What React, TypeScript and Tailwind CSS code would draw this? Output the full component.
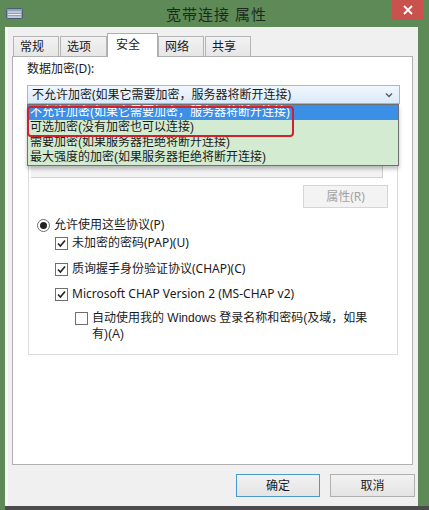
const font = { fontFamily: '"Noto Sans", "Noto Sans CJK SC", sans-serif' };
const listFont = { fontFamily: '"Liberation Sans", "Noto Sans CJK SC", sans-serif' };

const tabs = [
  { name: "常规", w: "w-[46px]", ml: "ml-[1px]" },
  { name: "选项", w: "w-[47px]", ml: "ml-[1px]" },
  { name: "安全", w: "w-[51px]", ml: "ml-0", active: true },
  { name: "网络", w: "w-[46px]", ml: "ml-0" },
  { name: "共享", w: "w-[46px]", ml: "ml-[1px]" },
];

const options = [
  "不允许加密(如果它需要加密，服务器将断开连接)",
  "可选加密(没有加密也可以连接)",
  "需要加密(如果服务器拒绝将断开连接)",
  "最大强度的加密(如果服务器拒绝将断开连接)",
];

function Check({ checked }: { checked: boolean }) {
  return (
    <span className="flex h-[13px] w-[13px] shrink-0 items-center justify-center border border-[#6f6f6f] bg-white">
      {checked && (
        <svg width="9" height="9" viewBox="0 0 9 9">
          <path d="M1 4.5 L3.4 7 L8 1.5" fill="none" stroke="#222" strokeWidth="1.6" />
        </svg>
      )}
    </span>
  );
}

export default function App() {
  return (
    <div
      className="relative flex h-[510px] w-[429px] flex-col overflow-hidden bg-[#5e8a58] text-[12px] text-[#1a1a1a]"
      style={font}
    >
      {/* title bar */}
      <div className="relative flex h-[27px] shrink-0 items-center">
        <svg className="ml-[6px]" width="17" height="11" viewBox="0 0 17 11">
          <rect x="0.5" y="0.5" width="16" height="10" rx="1" fill="#8fa3b8" stroke="#4d5f72" />
          <path d="M2 4h13M2 6.5h13M2 9h13" stroke="#e8eef4" strokeWidth="1" />
        </svg>
        <div className="absolute left-[166px] top-[3px] text-[length:15px] tracking-[1px] text-[color:#1c2a1c]">
          宽带连接 属性
        </div>
        <div className="absolute right-[6px] top-0 flex h-[20px] w-[31px] items-center justify-center bg-[#c9524f]">
          <svg width="10" height="10" viewBox="0 0 10 10">
            <path d="M1 1L9 9M9 1L1 9" stroke="#fff" strokeWidth="1.8" />
          </svg>
        </div>
      </div>

      {/* client area */}
      <div className="ml-[5px] flex h-[479px] w-[413px] shrink-0 flex-col border-l-[3px] border-[#f7faf7] bg-[#f0f0f0] pl-[4px]">
        {/* tabs */}
        <div className="mt-[6px] flex h-[23px] items-end">
          {tabs.map((t) =>
            t.active ? (
              <div
                key={t.name}
                className={`relative z-10 -mb-[1px] h-[24px] ${t.w} ${t.ml} border border-b-0 border-[#adadad] bg-white pl-[8px] pt-[3px] leading-[16px]`}
              >
                {t.name}
              </div>
            ) : (
              <div
                key={t.name}
                className={`h-[20px] ${t.w} ${t.ml} border border-b-0 border-[#b4b4b4] bg-gradient-to-b from-[#f2f2f2] to-[#e6e6e6] pl-[6px] pt-[2px] leading-[16px]`}
              >
                {t.name}
              </div>
            )
          )}
        </div>

        {/* tab pane */}
        <div className="relative h-[409px] w-[401px] border border-[#b0b0b0] bg-white pl-[14px]">
          <div className="mt-[5px] h-[14px] leading-[14px]">数据加密(D):</div>

          {/* combobox */}
          <div className="mt-[9px] flex h-[19px] w-[373px] items-center border border-[#8fbde9] bg-gradient-to-b from-[#f1f7fd] to-[#d9eafa] pl-[4px]">
            <span className="flex-1 leading-[16px]">{options[0]}</span>
            <svg className="mr-[6px]" width="8" height="6" viewBox="0 0 8 6">
              <path d="M1 1.5L4 4.5L7 1.5" fill="none" stroke="#5a5a5a" strokeWidth="1.4" />
            </svg>
          </div>

          {/* authentication group */}
          <div className="ml-[1px] mt-[14px] flex h-[237px] w-[370px] flex-col border border-[#dcdcdc]">
            <div className="h-[39px]" />
            <div className="ml-[2px] h-[20px] w-[352px] border-b border-r border-[#cfcfcf] bg-[#f3f3f3]" />
            <div className="ml-auto mr-[9px] mt-[7px] flex h-[23px] w-[85px] items-center justify-center border border-[#d5d5d5] bg-[#f3f3f3] text-[#a3a3a3]">
              属性(R)
            </div>
            <div className="ml-[8px] mt-[10px] flex h-[14px] items-center gap-[4px]">
              <span className="flex h-[13px] w-[13px] items-center justify-center rounded-full border border-[#6f6f6f] bg-white">
                <span className="h-[7px] w-[7px] rounded-full bg-[#222]" />
              </span>
              <span className="leading-[14px]">允许使用这些协议(P)</span>
            </div>
            <div className="ml-[26px] mt-[4px] flex h-[14px] items-center gap-[4px]">
              <Check checked />
              <span className="leading-[14px]">未加密的密码(PAP)(U)</span>
            </div>
            <div className="ml-[26px] mt-[12px] flex h-[14px] items-center gap-[4px]">
              <Check checked />
              <span className="leading-[14px]">质询握手身份验证协议(CHAP)(C)</span>
            </div>
            <div className="ml-[26px] mt-[11px] flex h-[14px] items-center gap-[4px]">
              <Check checked />
              <span className="leading-[14px]">Microsoft CHAP Version 2 (MS-CHAP v2)</span>
            </div>
            <div className="ml-[46px] mt-[9px] flex items-start gap-[4px]">
              <span className="mt-[2px]">
                <Check checked={false} />
              </span>
              <span className="leading-[16px]" style={listFont}>
                自动使用我的 Windows 登录名称和密码(及域，如果
                <br />
                有)(A)
              </span>
            </div>
          </div>

          {/* open dropdown list */}
          <div
            className="absolute left-[14px] top-[47px] z-20 w-[372px] border border-[#707070] bg-[#d3ebd0] shadow-[0_3px_4px_rgba(0,0,0,0.25)]"
            style={listFont}
          >
            {options.map((o, i) => (
              <div
                key={o}
                className={`h-[15px] whitespace-nowrap pl-[2px] leading-[15px] ${i === 0 ? "bg-[#3b8fe6] text-white" : ""}`}
              >
                {o}
              </div>
            ))}
          </div>
          {/* red annotation */}
          <div className="absolute left-[14px] top-[49px] z-30 h-[31px] w-[267px] rounded-[4px] border-2 border-[#d3202e]" />
        </div>

        {/* buttons */}
        <div className="mt-[9px] flex h-[23px] justify-end gap-[10px] pr-[3px]">
          <div className="flex w-[84px] items-center justify-center border border-[#4a9ad0] bg-gradient-to-b from-[#f2f2f2] to-[#e4e4e4]">
            确定
          </div>
          <div className="flex w-[85px] items-center justify-center border border-[#b0b0b0] bg-gradient-to-b from-[#f2f2f2] to-[#e4e4e4]">
            取消
          </div>
        </div>
      </div>
      <div className="ml-[5px] h-[4px] bg-[#4b4b4b]" />
    </div>
  );
}
